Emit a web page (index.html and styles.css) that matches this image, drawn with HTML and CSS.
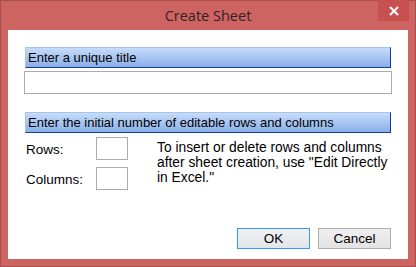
FILE: index.html
```html
<!DOCTYPE html>
<html lang="en">
<head>
    <meta charset="UTF-8">
    <title>Create Sheet</title>
    <link rel="stylesheet" href="styles.css">
</head>
<body>
    <div class="window">
        <div class="titlebar">
            <span class="title">Create Sheet</span>
            <div class="close">
                <svg width="12" height="12" viewBox="0 0 12 12"><path d="M2 2L10 10M10 2L2 10" stroke="#fff" stroke-width="2"/></svg>
            </div>
        </div>
        <div class="client">
            <div class="section-head">Enter a unique title</div>
            <input class="text-field" type="text">
            <div class="section-head second">Enter the initial number of editable rows and columns</div>
            <div class="size-row">
                <div class="size-fields">
                    <div class="field-line">
                        <label>Rows:</label>
                        <input class="small-field" type="text">
                    </div>
                    <div class="field-line">
                        <label>Columns:</label>
                        <input class="small-field" type="text">
                    </div>
                </div>
                <p class="note">To insert or delete rows and columns after sheet creation, use "Edit Directly in Excel."</p>
            </div>
            <div class="button-container">
                <button class="default" type="button">OK</button>
                <button type="button">Cancel</button>
            </div>
        </div>
    </div>
</body>
</html>
```

FILE: styles.css
```css
body {
    margin: 0;
    background-color: #cd6461;
    font-family: "Liberation Sans", Arial, sans-serif;
}
.window {
    width: 416px;
    height: 267px;
    box-sizing: border-box;
    border: 1px solid #a9504d;
    background-color: #cd6461;
    display: flex;
    flex-direction: column;
}
.titlebar {
    height: 29px;
    position: relative;
    display: flex;
    align-items: center;
    justify-content: center;
}
.title {
    font-family: "Open Sans", "Noto Sans", sans-serif;
    font-size: 14.5px;
    color: #2e2424;
    margin-top: -1px;
}
.close {
    position: absolute;
    top: -1px;
    right: 6px;
    width: 31px;
    height: 21px;
    background-color: #c75050;
    display: flex;
    align-items: center;
    justify-content: center;
}
.client {
    margin: 0 7px 7px 7px;
    flex: 1;
    background-color: #fff;
    padding: 17px 16px 10px 16px;
    display: flex;
    flex-direction: column;
    font-size: 13px;
    color: #000;
}
.section-head {
    margin: 0 1px;
    height: 21px;
    box-sizing: border-box;
    border-top: 1px solid #a6c2ee;
    border-left: 1px solid #a6c2ee;
    border-right: 1px solid #113c9c;
    border-bottom: 1px solid #113c9c;
    background: linear-gradient(#c7dcfa, #89afe8);
    padding: 0 0 0 2px;
    line-height: 19px;
    font-size: 13px;
}
.second {
    margin-top: 18px;
}
.text-field {
    margin: 3px 0 0 0;
    height: 23px;
    box-sizing: border-box;
    border: 1px solid #acacac;
    padding: 0;
}
.size-row {
    display: flex;
    margin-top: 4px;
}
.size-fields {
    display: flex;
    flex-direction: column;
    gap: 7px;
    width: 133px;
    flex-shrink: 0;
}
.field-line {
    display: flex;
    align-items: center;
}
.field-line label {
    width: 70px;
    padding-left: 2px;
    margin-top: 2px;
    font-size: 13.5px;
}
.small-field {
    width: 32px;
    height: 23px;
    box-sizing: border-box;
    border: 1px solid #acacac;
    padding: 0;
    margin: 0;
}
.note {
    margin: 3px 0 0 0;
    line-height: 15px;
    width: 240px;
    font-size: 13.8px;
}
.button-container {
    margin-top: auto;
    display: flex;
    justify-content: flex-end;
    gap: 8px;
    padding-right: 1px;
}
button {
    width: 73px;
    height: 21px;
    box-sizing: border-box;
    border: 1px solid #adadad;
    background: linear-gradient(#efefef, #e3e3e3);
    font-family: "Liberation Sans", Arial, sans-serif;
    font-size: 13.5px;
    color: #000;
    padding: 0;
}
button.default {
    border-color: #3399ff;
    background: linear-gradient(#eef0f2, #e3e6e9);
}
```
